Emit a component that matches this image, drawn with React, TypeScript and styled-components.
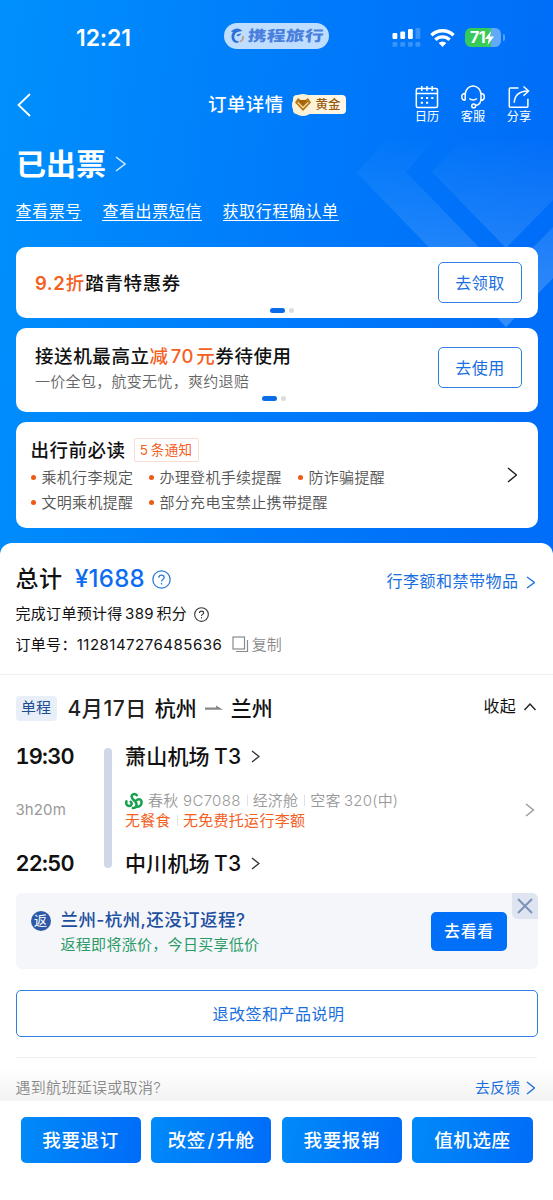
import React from "react";
import styled, { createGlobalStyle } from "styled-components";

const Global = createGlobalStyle`
  * { box-sizing: border-box; }
  body {
    margin: 0;
    background: #fff;
    font-family: Inter, "Noto Sans CJK SC", sans-serif;
    -webkit-font-smoothing: antialiased;
  }
  button { font-family: inherit; margin: 0; padding: 0; cursor: pointer; }
  svg { display: block; flex: none; }
`;

const BLUE = "#1a6fe0";
const ORANGE = "#f4601e";

const Phone = styled.main`
  width: 553px;
  height: 1200px;
  overflow: hidden;
  position: relative;
  display: flex;
  flex-direction: column;
  background: linear-gradient(97deg, #0090fc 0%, #007bfb 45%, #006ef8 80%, #006df8 100%);
`;

const Backdrop = styled.svg`
  position: absolute;
  left: 0;
  top: 0;
`;

const Text = styled.span<{ $s: number; $ls?: number; $w?: number; $c?: string; $ws?: number }>`
  font-size: ${(p) => p.$s}px;
  letter-spacing: ${(p) => p.$ls ?? 0}px;
  word-spacing: ${(p) => p.$ws ?? 0}px;
  font-weight: ${(p) => p.$w ?? 400};
  color: ${(p) => p.$c ?? "inherit"};
  line-height: 1.2;
  white-space: nowrap;
`;

const Row = styled.div<{ $h?: number; $gap?: number; $ml?: number; $mt?: number }>`
  display: flex;
  align-items: center;
  height: ${(p) => (p.$h ? `${p.$h}px` : "auto")};
  gap: ${(p) => p.$gap ?? 0}px;
  margin-left: ${(p) => p.$ml ?? 0}px;
  margin-top: ${(p) => p.$mt ?? 0}px;
`;

const Spacer = styled.div`
  flex: 1;
`;

/* ---------- header ---------- */

const Hero = styled.header`
  position: relative;
  height: 543px;
  flex: none;
  color: #fff;
  display: flex;
  flex-direction: column;
`;

const StatusBar = styled.div`
  height: 76px;
  display: grid;
  grid-template-columns: 224px 105px 1fr;
  align-items: center;
`;

const Clock = styled(Text)`
  padding: 2px 0 0 76px;
`;

const BrandPill = styled.div`
  height: 26px;
  margin-top: -4px;
  border-radius: 13px;
  background: #bfddff;
  display: flex;
  align-items: center;
  padding-left: 6px;
  gap: 3px;
`;

const BrandName = styled.span`
  font-size: 14.5px;
  line-height: 20px;
  font-weight: 800;
  color: #4a80dc;
  white-space: nowrap;
  letter-spacing: 0.3px;
  transform: scaleX(1.28) skewX(-4deg);
  transform-origin: 0 50%;
`;

const StatusIcons = styled.div`
  display: flex;
  align-items: center;
  padding-left: 63px;
  gap: 9px;
`;

const NavBar = styled.div`
  height: 58px;
  display: flex;
  align-items: center;
  padding: 0 22px 0 17px;
`;

const NavTitle = styled.div`
  display: flex;
  align-items: center;
  gap: 9px;
  margin: -1px 0 0 177px;
`;

const GoldBadge = styled.div`
  width: 53px;
  height: 19px;
  border-radius: 4px;
  background: linear-gradient(90deg, #fdf0d4, #fff8ea);
  display: flex;
  align-items: center;
`;

const BadgeDisc = styled.span`
  width: 22px;
  height: 22px;
  margin: 0 2px 0 -1px;
  flex: none;
  border-radius: 50%;
  background: #fdf1d8;
  display: grid;
  place-items: center;
`;

const NavActions = styled.div`
  display: flex;
  gap: 22px;
  margin-left: auto;
`;

const NavAction = styled.div`
  width: 24px;
  display: flex;
  flex-direction: column;
  align-items: center;
  gap: 1px;
`;

const StatusTitle = styled(Row)`
  height: 60px;
  padding-left: 16px;
  gap: 9px;
`;

const LinkRow = styled.nav`
  height: 53px;
  display: flex;
  align-items: flex-start;
  padding: 7px 0 0 15.5px;
  gap: 20.5px;
`;

const HeroLink = styled.a`
  height: 19.5px;
  border-bottom: 1.3px solid #fff;
  font-size: 16px;
  line-height: 20px;
  letter-spacing: 0.6px;
  white-space: nowrap;
`;

const Card = styled.section<{ $h: number }>`
  position: relative;
  height: ${(p) => p.$h}px;
  margin: 0 15px 10px 15.5px;
  flex: none;
  border-radius: 10px;
  background: #fff;
  color: #111;
`;

const Promo = styled(Card)`
  display: flex;
  align-items: center;
  justify-content: space-between;
  padding: 0 16px 0 19.5px;
`;

const TextStack = styled.div<{ $gap: number; $lift?: number }>`
  display: flex;
  flex-direction: column;
  gap: ${(p) => p.$gap}px;
  margin-bottom: ${(p) => p.$lift ?? 0}px;
`;

const OutlineButton = styled.button<{ $lift?: number }>`
  width: 84px;
  height: 41px;
  padding: 0 0 2px 0;
  margin-bottom: ${(p) => p.$lift ?? 0}px;
  border: 1.4px solid #2f80e2;
  border-radius: 5px;
  background: #fff;
  color: ${BLUE};
  font-size: 16px;
  letter-spacing: 0.5px;
`;

const Pager = styled.div<{ $x: number; $b: number }>`
  position: absolute;
  left: ${(p) => p.$x}px;
  bottom: ${(p) => p.$b}px;
  display: flex;
  gap: 4px;
  i { width: 5px; height: 5px; border-radius: 3px; background: #d9dbdd; }
  i:first-child { width: 15px; background: #0b6cea; }
`;

const Notice = styled(Card)`
  display: flex;
  align-items: center;
  padding: 0 21px 0 15px;
`;

const NoticeTag = styled.span`
  height: 24px;
  width: 65px;
  border: 1px solid #f9ddd2;
  border-radius: 2px;
  display: flex;
  align-items: center;
  justify-content: center;
`;

const NoticeBody = styled.div`
  display: flex;
  flex-direction: column;
  margin-top: 2px;
  flex: 1;
`;

const NoticeHead = styled(Row)`
  height: 24px;
  gap: 8px;
  margin-bottom: 2px;
`;

const Bullet = styled.span<{ $w?: number }>`
  display: flex;
  align-items: center;
  gap: 6px;
  width: ${(p) => (p.$w ? `${p.$w}px` : "auto")};
  height: 25px;
  font-size: 15px;
  letter-spacing: 0.3px;
  color: #555;
  white-space: nowrap;
  font-weight: 350;
  &::before {
    content: "";
    width: 5px;
    height: 5px;
    margin-top: 1px;
    border-radius: 50%;
    background: #ee5a13;
  }
`;

/* ---------- sheet ---------- */

const Sheet = styled.section`
  position: relative;
  flex: 1;
  background: #fff;
  border-radius: 12px 12px 0 0;
  color: #111;
  display: flex;
  flex-direction: column;
`;

const Summary = styled.div`
  height: 132px;
  flex: none;
  border-bottom: 1.5px solid #f0f1f3;
  padding: 19px 18px 0 15.5px;
`;

const Trip = styled.div`
  height: 218px;
  flex: none;
  padding: 18px 18px 0 15.5px;
`;

const WayTag = styled.span`
  width: 41px;
  height: 25px;
  margin: 0 11px 2px 0;
  border-radius: 4px;
  background: #e9eff9;
  display: flex;
  align-items: center;
  justify-content: center;
`;

const Fold = styled.div`
  display: flex;
  align-items: center;
  gap: 7px;
  margin: 0 -2px 5px 0;
`;

const Itinerary = styled.div`
  display: grid;
  grid-template-columns: 88.5px 8px 1fr 10px;
  height: 135px;
  margin-top: 17px;
`;

const Times = styled.div`
  display: flex;
  flex-direction: column;
  justify-content: space-between;
`;

const Clocktime = styled(Text)`
  font-variant-numeric: tabular-nums;
`;

const Rail = styled.div`
  height: 120px;
  margin-top: 6px;
  border-radius: 4px;
  background: #d0d8e8;
`;

const Stops = styled.div`
  display: flex;
  flex-direction: column;
  justify-content: space-between;
  padding: 1px 0 0 13px;
`;

const Sep = styled.i`
  width: 1px;
  height: 11px;
  background: #dfe1e5;
  margin: 0 5px 0 6px;
`;

const ReturnTrip = styled.div`
  position: relative;
  height: 76px;
  margin: 0 15.5px;
  flex: none;
  border-radius: 6px;
  background: #f4f6fa;
  display: flex;
  align-items: center;
  padding: 0 30.5px 0 15px;
`;

const ReturnMark = styled.span`
  width: 20px;
  height: 20px;
  margin: 0 10px 21px 0;
  border-radius: 50%;
  background: #2d5aa8;
  display: flex;
  align-items: center;
  justify-content: center;
`;

const SolidButton = styled.button`
  width: 76px;
  height: 39px;
  padding-bottom: 2px;
  border: 0;
  border-radius: 5px;
  background: #0070f8;
  color: #fff;
  font-size: 16px;
  font-weight: 500;
  letter-spacing: 0.6px;
`;

const CloseCorner = styled.span`
  position: absolute;
  right: 0;
  top: 0;
  width: 26px;
  height: 26px;
  border-radius: 0 6px 0 6px;
  background: #dfe5f0;
  display: grid;
  place-items: center;
`;

const RulesButton = styled(OutlineButton)`
  width: auto;
  height: 47px;
  flex: none;
  padding-left: 4px;
  margin: 21px 15.5px 20px;
`;

const Feedback = styled.div`
  flex: none;
  height: 44px;
  position: relative;
  background: linear-gradient(#fff 25%, #f3f3f3);
  padding: 17px 18px 0 15.5px;
  display: flex;
  align-items: center;
  &::before {
    content: "";
    position: absolute;
    left: 16px;
    right: 16px;
    top: 0;
    height: 1px;
    background: #eceef0;
  }
`;

const ActionBar = styled.footer`
  flex: 1;
  background: #fff;
  padding: 15.5px 20.5px 0 20.5px;
  display: grid;
  grid-template-columns: repeat(4, 1fr);
  gap: 10.5px;
`;

const Action = styled.button`
  height: 46.5px;
  padding-bottom: 2px;
  border: 0;
  border-radius: 5px;
  background: linear-gradient(100deg, #008af9, #006cf8);
  color: #fff;
  font-size: 18.5px;
  letter-spacing: 0.6px;
  font-weight: 450;
`;

const Slash = styled.span`
  margin: 0 1.5px;
`;

/* ---------- icons ---------- */

type ChevronProps = { w: number; h: number; color: string; t?: number };

const Chevron = ({ w, h, color, t = 1.4 }: ChevronProps) => (
  <svg width={w + 2} height={h + 2} viewBox={`-1 -1 ${w + 2} ${h + 2}`} fill="none" stroke={color} strokeWidth={t}>
    <path d={`M0 0L${w} ${h / 2}L0 ${h}`} />
  </svg>
);

const Help = ({ size, color, t }: { size: number; color: string; t: number }) => (
  <svg width={size} height={size} viewBox="0 0 18 18" fill="none" stroke={color} strokeWidth={t}>
    <circle cx="9" cy="9" r="8.2" />
    <path d="M6.5 7.3C6.5 5.8 7.6 4.9 9 4.9s2.5.9 2.5 2.2c0 1.7-2.5 1.9-2.5 3.7" />
    <path d="M9 12.2v1.5" />
  </svg>
);

const Signal = () => (
  <svg width="29" height="20" viewBox="0 0 29 20" fill="#fff">
    <rect x="0.5" y="5" width="4.8" height="6" rx="1.2" />
    <rect x="8.3" y="3.5" width="4.8" height="7.5" rx="1.2" />
    <rect x="16" y="1" width="4.8" height="10" rx="1.2" />
    <g opacity=".22">
      <rect x="23.5" y="0" width="4.8" height="11" rx="1.2" />
      <rect x="0.5" y="14" width="4.8" height="4.8" rx="1.2" />
      <rect x="8.3" y="14" width="4.8" height="4.8" rx="1.2" />
      <rect x="16" y="14" width="4.8" height="4.8" rx="1.2" />
      <rect x="23.5" y="14" width="4.8" height="4.8" rx="1.2" />
    </g>
  </svg>
);

const Wifi = () => (
  <svg width="25" height="19" viewBox="0 0 25 19" fill="none" stroke="#fff" strokeWidth="3.4">
    <path d="M1.4 6.200a16 16 0 0 1 22.2 0" />
    <path d="M5.4 10.800a10 10 0 0 1 14.2 0" />
    <path d="M12.5 18L8.7 14a5.4 5.4 0 0 1 7.6 0z" fill="#fff" stroke="none" />
  </svg>
);

const BatteryBox = styled.div`
  display: flex;
  align-items: center;
  gap: 1.5px;
  margin-left: 1px;
  margin-top: -1px;
  &::after {
    content: "";
    width: 2px;
    height: 7px;
    border-radius: 0 2px 2px 0;
    background: rgba(255, 255, 255, 0.35);
  }
`;

const BatteryCell = styled.div`
  width: 36px;
  height: 19px;
  border-radius: 6px;
  background: linear-gradient(90deg, #35cb5a 72%, #62a9fa 72%);
  display: flex;
  align-items: center;
  padding-left: 5px;
`;

const Dolphin = () => (
  <svg width="15" height="16" viewBox="0 0 15 16" fill="#2d6fd4">
    <path d="M.8 3.6C4.2.3 8-.2 10 1.2l2.6 1.9-3 .5C6.800 3.700 4.300 6 4.300 9c0 2.600 1.800 4.400 4.600 4.300l-.8 1.500C4.500 15.300 1.500 13 1.500 8.800c0-2 .6-3.600 1.500-4.700z" />
    <path d="M13 8c.4 2.500-.8 4.800-3.300 5.700" fill="none" stroke="#b99a8a" strokeWidth="1.700" />
    <path d="M6.300 7.800c1-1.800 3-2.400 5.200-1.800L8.300 8.300z" />
  </svg>
);

const Diamond = () => (
  <svg width="16" height="13" viewBox="0 0 16 13">
    <path d="M3 0L6 2.300h4L13 0l3 4.500L8 13 0 4.500z" fill="#b67718" />
    <path d="M2.800 4.300L8 9.600l5.200-5.300" fill="none" stroke="#fbe3b2" strokeWidth="1.100" />
    <path d="M5 2h6l.8 1.800L8 7.500 4.200 3.800z" fill="#a5640c" />
  </svg>
);

const Calendar = () => (
  <svg width="24" height="24" viewBox="0 0 24 24" fill="none" stroke="#fff" strokeWidth="1.500">
    <rect x="1.300" y="3.500" width="21.200" height="19" rx="1.500" />
    <path d="M1.300 8.600h21.200M6.800 1v5M12 1v5M17.200 1v5" />
    <path d="M5.800 13h2.200M11 13h2.200M16.200 13h2.200M5.800 17.700h2.200M11 17.700h2.200" strokeWidth="2" />
  </svg>
);

const Headset = () => (
  <svg width="24" height="24" viewBox="0 0 24 24" fill="none" stroke="#fff" strokeWidth="1.500">
    <path d="M4.200 15.200V9.300a7.900 8.300 0 0 1 15.800 0v4.200c0 4.300-2 6.300-5 7" />
    <path d="M4.200 8.400C1.900 8.400.8 9.800.8 11.800s1.100 3.500 3.400 3.500M20 8.400c2.300 0 3.300 1.400 3.300 3.400s-1 3.500-3.300 3.500" />
    <path d="M8.300 13.500c2 2 5.600 2 7.600 0" />
    <circle cx="12.700" cy="20.900" r="1.900" />
  </svg>
);

const Share = () => (
  <svg width="24" height="24" viewBox="0 0 24 24" fill="none" stroke="#fff" strokeWidth="1.500">
    <path d="M11.500 3H3.300a1 1 0 0 0-1 1v17.200a1 1 0 0 0 1 1h16.600a1 1 0 0 0 1-1v-7.500" />
    <path d="M7.200 17.800C7.600 10.500 12 6.200 20.800 6" />
    <path d="M16.500 1.500L21.500 6l-5 4.700" />
  </svg>
);

const Copy = () => (
  <svg width="17" height="17" viewBox="0 0 17 17" fill="none" stroke="#8a8a8a" strokeWidth="1.200">
    <rect x="1" y="1" width="11.500" height="12" />
    <path d="M15.500 4v11.500H4" />
  </svg>
);

const RouteArrow = () => (
  <svg width="18" height="8" viewBox="0 0 18 8" fill="#888">
    <path d="M0 2.500h11V.5L18 4.700H0z" />
  </svg>
);

const SpringLogo = () => (
  <svg width="18" height="18" viewBox="0 0 18 18" fill="none" stroke="#17a04e" strokeWidth="2.500" strokeLinecap="round">
    <path d="M11.800 3.200C10.300 1.300 6.700 1.700 6.600 4.600c0 3.300 5 4.200 5 7.900 0 2.400-1.800 3.800-3.800 3.600" />
    <path d="M1.500 9.300c-1 2.700.8 4.900 3 4.700 2.300-.2 2.800-3 1.200-4.200" />
    <path d="M11.300 8.400c2-2 5.200-1.300 5.300 1.800.1 2.800-2.300 4.600-4.600 4.600" />
  </svg>
);

export default function App() {
  return (
    <Phone>
      <Global />
      <Backdrop width="553" height="543" viewBox="0 0 553 543">
        <defs>
          <linearGradient id="facet" x1="0" y1="135" x2="0" y2="330" gradientUnits="userSpaceOnUse">
            <stop offset="0" stopColor="#fff" stopOpacity="0" />
            <stop offset=".55" stopColor="#fff" stopOpacity=".12" />
            <stop offset="1" stopColor="#fff" stopOpacity=".22" />
          </linearGradient>
        </defs>
        <g fill="url(#facet)">
          <path d="M357 173L385 140H434L406 172 506 275 553 227V278L506 327z" />
          <path d="M432 172L462 140H553V200L506 248z" />
        </g>
      </Backdrop>

      <Hero>
        <StatusBar>
          <Clock $s={23} $w={600} $ls={-0.1}>12:21</Clock>
          <BrandPill>
            <Dolphin />
            <BrandName>携程旅行</BrandName>
          </BrandPill>
          <StatusIcons>
            <Signal />
            <Wifi />
            <BatteryBox>
              <BatteryCell>
                <Text $s={16} $w={700} $ls={-0.500}>71</Text>
                <svg width="9" height="14" viewBox="0 0 9 14" fill="#fff">
                  <path d="M6 0L0 8h3.700L2.600 14 9 5.500H5z" />
                </svg>
              </BatteryCell>
            </BatteryBox>
          </StatusIcons>
        </StatusBar>

        <NavBar>
          <svg width="14" height="24" viewBox="0 0 14 24" fill="none" stroke="#fff" strokeWidth="1.800">
            <path d="M13 1L1.500 12 13 23" />
          </svg>
          <NavTitle>
            <Text $s={18.500} $ls={0.400} $w={500}>订单详情</Text>
            <GoldBadge>
              <BadgeDisc><Diamond /></BadgeDisc>
              <Text $s={12.500} $w={500} $c="#9a5b12">黄金</Text>
            </GoldBadge>
          </NavTitle>
          <NavActions>
            <NavAction><Calendar /><Text $s={12.200}>日历</Text></NavAction>
            <NavAction><Headset /><Text $s={12.200}>客服</Text></NavAction>
            <NavAction><Share /><Text $s={12.200}>分享</Text></NavAction>
          </NavActions>
        </NavBar>

        <StatusTitle>
          <Text $s={30} $w={700}>已出票</Text>
          <Chevron w={9} h={14} color="#cfe6ff" t={1.500} />
        </StatusTitle>

        <LinkRow>
          <HeroLink>查看票号</HeroLink>
          <HeroLink>查看出票短信</HeroLink>
          <HeroLink>获取行程确认单</HeroLink>
        </LinkRow>

        <Promo $h={71}>
          <Row $gap={0.5} $mt={1}>
            <Text $s={18.500} $w={600} $ls={0.500} $c={ORANGE}>9.2</Text>
            <Text $s={18.500} $w={500} $ls={0.600} $c={ORANGE}>折</Text>
            <Text $s={18.500} $w={500} $ls={0.600}>踏青特惠券</Text>
          </Row>
          <OutlineButton>去领取</OutlineButton>
          <Pager $x={254.500} $b={5}><i /><i /></Pager>
        </Promo>

        <Promo $h={84}>
          <TextStack $gap={5} $lift={4}>
            <Row>
              <Text $s={18.500} $w={500} $ls={0.600}>接送机最高立</Text>
              <Text $s={18.500} $w={500} $ls={0.500} $ws={-3.200} $c={ORANGE}>减 70 元</Text>
              <Text $s={18.500} $w={500} $ls={0.600}>券待使用</Text>
            </Row>
            <Text $s={15} $ls={0.300} $w={350} $c="#666">一价全包，航变无忧，爽约退赔</Text>
          </TextStack>
          <OutlineButton $lift={5}>去使用</OutlineButton>
          <Pager $x={246.500} $b={11}><i /><i /></Pager>
        </Promo>

        <Notice $h={106}>
          <NoticeBody>
            <NoticeHead>
              <Text $s={18.500} $w={500} $ls={0.500}>出行前必读</Text>
              <NoticeTag><Text $s={13.500} $ls={0.300} $ws={-1.500} $c={ORANGE}>5 条通知</Text></NoticeTag>
            </NoticeHead>
            <Row>
              <Bullet $w={118}>乘机行李规定</Bullet>
              <Bullet $w={149}>办理登机手续提醒</Bullet>
              <Bullet>防诈骗提醒</Bullet>
            </Row>
            <Row>
              <Bullet $w={118}>文明乘机提醒</Bullet>
              <Bullet>部分充电宝禁止携带提醒</Bullet>
            </Row>
          </NoticeBody>
          <Chevron w={8.500} h={14} color="#222" t={1.500} />
        </Notice>
      </Hero>

      <Sheet>
        <Summary>
          <Row $h={35}>
            <Text $s={23} $w={500} $ls={0.500}>总计</Text>
            <Row $ml={12.500} $gap={7}>
              <Text $s={24} $w={500} $ls={0.250} $c="#0c6df0">¥1688</Text>
              <Help size={19} color="#2b7ad8" t={1.200} />
            </Row>
            <Spacer />
            <Row $gap={7} $mt={5}>
              <Text $s={16} $ls={0.500} $c={BLUE}>行李额和禁带物品</Text>
              <Chevron w={7.500} h={11} color={BLUE} t={1.300} />
            </Row>
          </Row>
          <Row $h={34} $gap={6.5}>
            <Text $s={15} $ls={0.300} $ws={-2}>完成订单预计得 389 积分</Text>
            <Help size={15} color="#333" t={1.300} />
          </Row>
          <Row $h={27}>
            <Text $s={15} $ls={0.300}>订单号：</Text>
            <Text $s={15} $ls={0.500}>1128147276485636</Text>
            <Row $ml={9.500} $gap={3}>
              <Copy />
              <Text $s={15} $c="#8a8a8a" $w={350}>复制</Text>
            </Row>
          </Row>
        </Summary>

        <Trip>
          <Row $h={32}>
            <WayTag><Text $s={15} $c="#204d91">单程</Text></WayTag>
            <Text $s={21} $w={500} $ls={0.550} $c="#222">4月17日</Text>
            <Row $ml={8} $gap={8}>
              <Text $s={21} $w={500}>杭州</Text>
              <RouteArrow />
              <Text $s={21} $w={500}>兰州</Text>
            </Row>
            <Spacer />
            <Fold>
              <Text $s={16} $ls={0.200}>收起</Text>
              <svg width="14" height="10" viewBox="0 0 14 10" fill="none" stroke="#222" strokeWidth="1.400">
                <path d="M1.500 8L7 2l5.500 6" />
              </svg>
            </Fold>
          </Row>
          <Itinerary>
            <Times>
              <Row $h={27} $mt={1}><Clocktime $s={21.800} $w={600} $ls={-0.800}>19:30</Clocktime></Row>
              <Text $s={15} $c="#999" $ls={0.100}>3h20m</Text>
              <Row $h={27}><Clocktime $s={21.800} $w={600} $ls={-0.800}>22:50</Clocktime></Row>
            </Times>
            <Rail />
            <Stops>
              <Row $h={27} $gap={9.5}>
                <Text $s={21} $w={500} $ls={0.200} $ws={-1.500}>萧山机场 T3</Text>
                <Chevron w={7} h={11} color="#333" t={1.300} />
              </Row>
              <Row $mt={1}>
                <div>
                  <Row $h={20}>
                    <SpringLogo />
                    <Row $ml={5}><Text $s={15} $ls={0.300} $w={350} $c="#999">春秋 9C7088</Text></Row>
                    <Sep />
                    <Text $s={15} $ls={0.200} $w={350} $c="#999">经济舱</Text>
                    <Sep />
                    <Text $s={15} $ls={0.200} $ws={-1} $w={350} $c="#999">空客 320(中)</Text>
                  </Row>
                  <Row $h={20}>
                    <Text $s={15} $ls={0.300} $c={ORANGE}>无餐食</Text>
                    <Sep />
                    <Text $s={15} $ls={0.300} $c={ORANGE}>无免费托运行李额</Text>
                  </Row>
                </div>
              </Row>
              <Row $h={27} $gap={9.5}>
                <Text $s={21} $w={500} $ls={0.200} $ws={-1.500}>中川机场 T3</Text>
                <Chevron w={7} h={11} color="#333" t={1.300} />
              </Row>
            </Stops>
            <Row><Chevron w={7.500} h={12} color="#999" t={1.400} /></Row>
          </Itinerary>
        </Trip>

        <ReturnTrip>
          <ReturnMark><Text $s={13} $c="#fff">返</Text></ReturnMark>
          <TextStack $gap={6}>
            <Text $s={17.500} $w={500} $c="#1d4f9f" $ls={0.400}>兰州-杭州,还没订返程?</Text>
            <Text $s={15} $c="#2a9a66" $ls={0.300}>返程即将涨价，今日买享低价</Text>
          </TextStack>
          <Spacer />
          <SolidButton>去看看</SolidButton>
          <CloseCorner>
            <svg width="16" height="16" viewBox="0 0 16 16" stroke="#7c92b8" strokeWidth="2">
              <path d="M1 1l14 14M15 1L1 15" />
            </svg>
          </CloseCorner>
        </ReturnTrip>

        <RulesButton>退改签和产品说明</RulesButton>

        <Feedback>
          <Text $s={15} $c="#888" $ls={0.300} $w={350}>遇到航班延误或取消?</Text>
          <Spacer />
          <Row $gap={5}>
            <Text $s={15} $c={BLUE} $ls={0.200}>去反馈</Text>
            <Chevron w={7.500} h={12} color={BLUE} t={1.300} />
          </Row>
        </Feedback>

        <ActionBar>
          <Action>我要退订</Action>
          <Action>改签<Slash>/</Slash>升舱</Action>
          <Action>我要报销</Action>
          <Action>值机选座</Action>
        </ActionBar>
      </Sheet>
    </Phone>
  );
}
